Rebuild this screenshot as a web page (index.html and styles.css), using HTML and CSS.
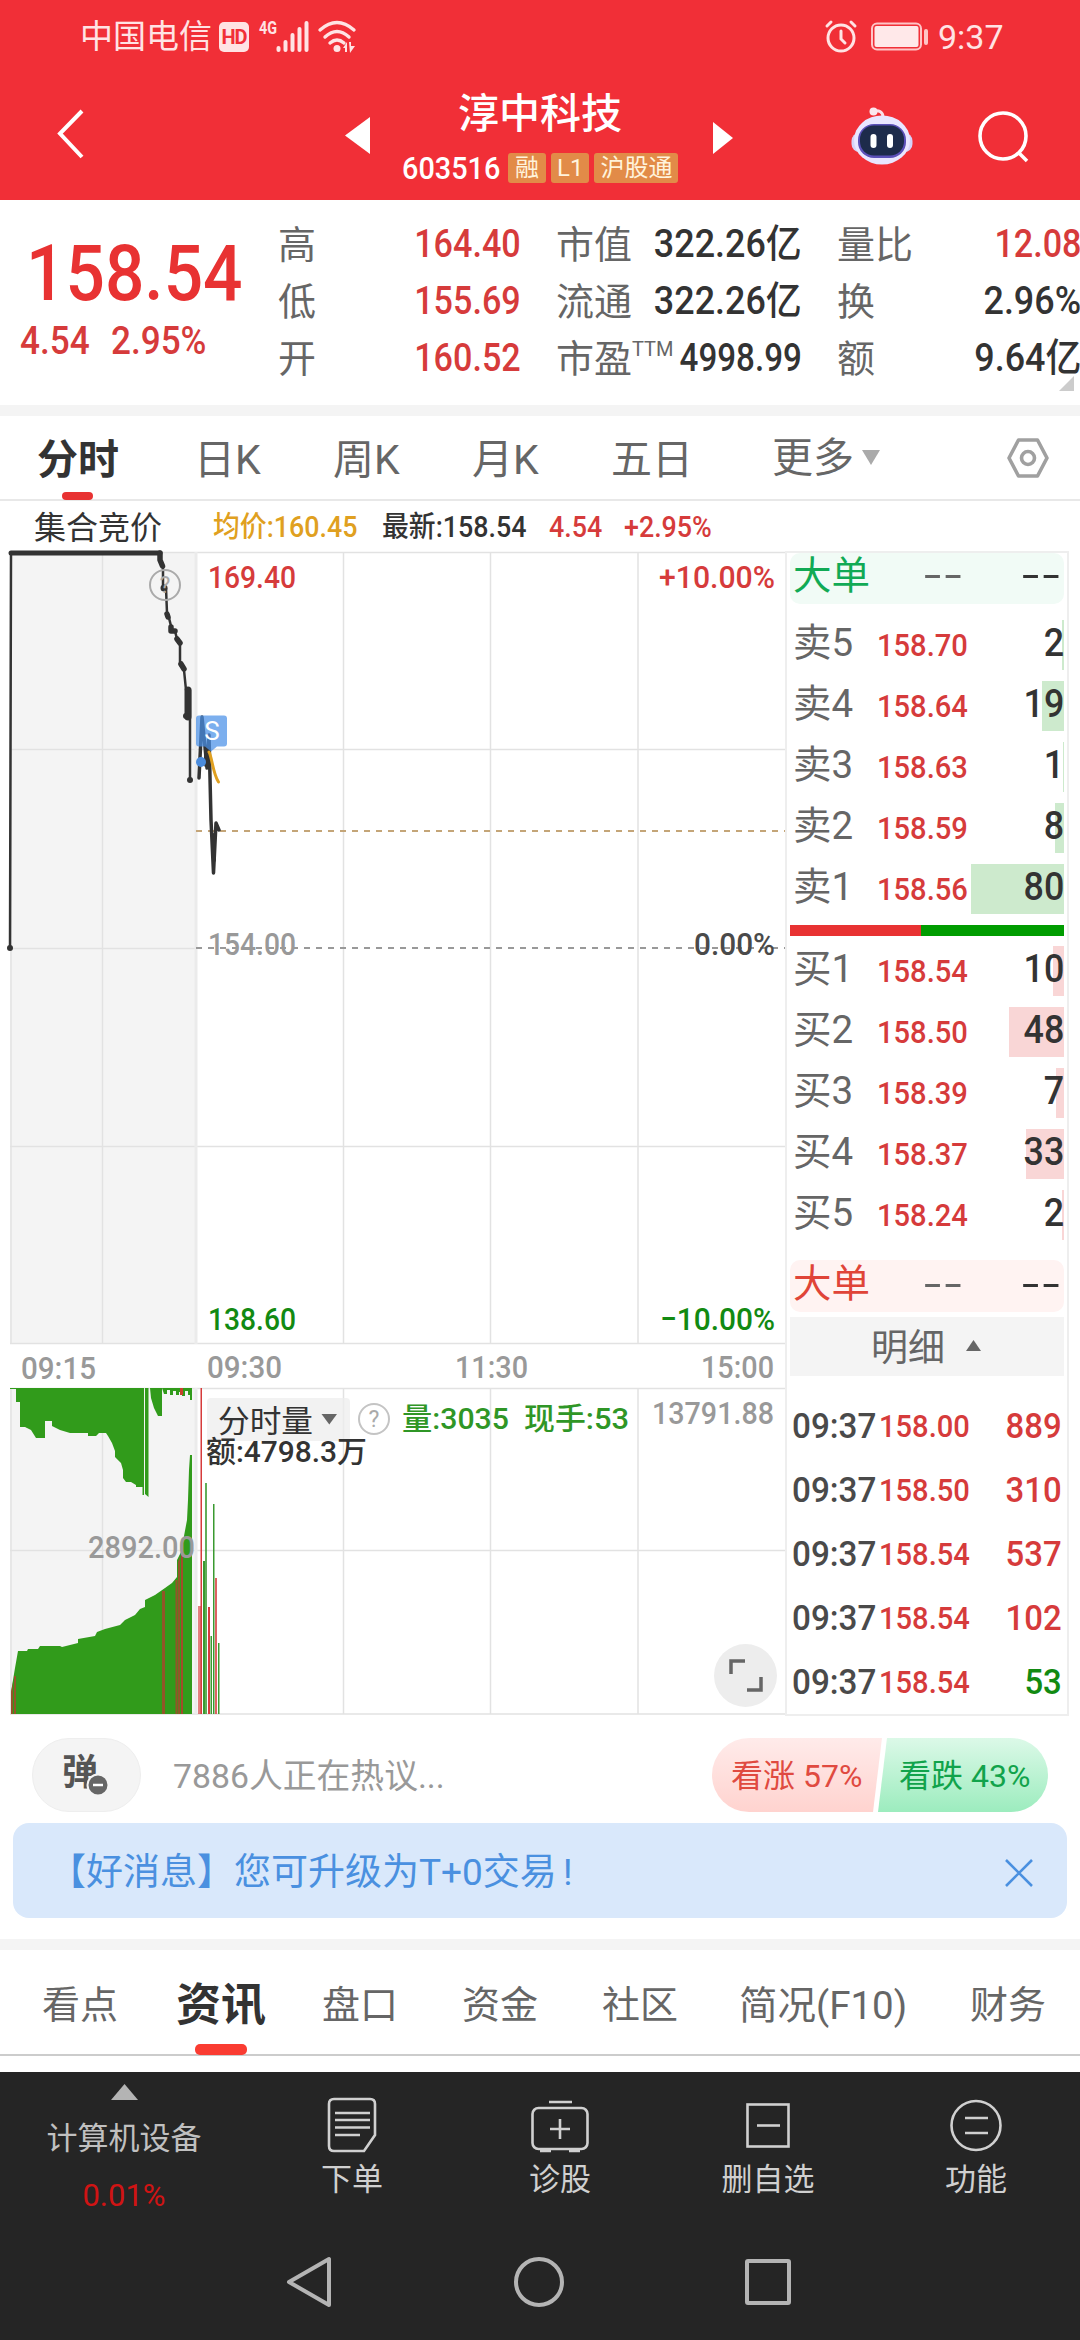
FILE: index.html
```html
<!DOCTYPE html>
<html lang="zh-CN">
<head>
<meta charset="utf-8">
<title>淳中科技 603516</title>
<link rel="stylesheet" href="styles.css">
</head>
<body>
<header class="top">
  <div class="status">
    <span class="carrier">中国电信</span>
    <span class="hd">HD</span>
    <svg class="signal" width="100" height="34" viewBox="0 0 100 34" fill="#ffe3e4">
      <text x="0" y="14" font-size="19" font-weight="700" textLength="18" lengthAdjust="spacingAndGlyphs">4G</text>
      <rect x="17.500" y="26" width="4" height="6" rx="2"/><rect x="24.500" y="20" width="4" height="12" rx="2"/><rect x="31.500" y="13" width="4" height="19" rx="2"/><rect x="38.500" y="7" width="4" height="25" rx="2"/><rect x="45.500" y="1" width="4" height="31" rx="2"/>
      <g fill="none" stroke="#ffe3e4" stroke-width="3.400" stroke-linecap="round"><path d="M61 10Q78-5 95 10"/><path d="M66 17Q78 6 90 17"/><path d="M71 23Q78 17 85 23"/></g>
      <circle cx="78" cy="28.500" r="3.500"/><path d="M84 28l4-6v10h-2v-4zM90 22h2v4h4l-5 7z"/>
    </svg>
    <svg class="alarm" width="32" height="34" viewBox="0 0 32 34" fill="none" stroke="#ffe3e4" stroke-width="3" stroke-linecap="round"><circle cx="16" cy="18" r="13"/><path d="M16 11v8l4 4M2 6l4-4M30 6l-4-4"/></svg>
    <svg class="battery" width="60" height="32" viewBox="0 0 60 32"><rect x="2" y="2.500" width="49" height="26" rx="5" fill="none" stroke="#ffc4c6" stroke-width="2"/><rect x="4.500" y="5" width="44" height="21" rx="2" fill="#ffe8e9"/><rect x="54" y="8" width="4" height="16" rx="2" fill="#ffc4c6"/></svg>
    <span class="clock">9:37</span>
  </div>
  <div class="bar">
    <svg class="back" width="30" height="52" viewBox="0 0 30 52" fill="none" stroke="#fff" stroke-width="4"><path d="M26 3 4 25.500 26 49"/></svg>
    <svg class="prev" width="25" height="37" viewBox="0 0 25 37"><path d="M0 18.500 25 0v37z" fill="#fff"/></svg>
    <div class="name">
      <h1>淳中科技</h1>
      <div class="code"><span class="digits">603516</span><i>融</i><i>L1</i><i>沪股通</i></div>
    </div>
    <svg class="next" width="20" height="32" viewBox="0 0 20 32"><path d="M20 16 0 0v32z" fill="#fff"/></svg>
    <svg class="robot" width="64" height="60" viewBox="0 0 64 60"><path d="M33 11C33 6 29 4 24 5" fill="none" stroke="#fbdfe8" stroke-width="3"/><circle cx="23.500" cy="5.500" r="4" fill="#fbe7ee"/><rect x="1.500" y="27" width="61" height="19" rx="8" fill="#d6d3f8"/><ellipse cx="32" cy="34" rx="28" ry="24.500" fill="#e9e6ff"/><rect x="8" y="18" width="48" height="34" rx="16" fill="#5b50b8"/><rect x="10" y="19.500" width="44" height="30" rx="14" fill="#1d2b4b"/><rect x="20.500" y="28" width="6" height="14" rx="3" fill="#fff"/><rect x="37" y="28" width="6" height="14" rx="3" fill="#fff"/></svg>
    <svg class="search" width="56" height="56" viewBox="0 0 56 56" fill="none" stroke="#fff" stroke-width="3.600"><circle cx="27" cy="26" r="23"/><path d="M42 42l9 9"/></svg>
  </div>
</header>

<section class="quote">
  <div class="last"><b>158.54</b><p><span>4.54</span><span>2.95%</span></p></div>
  <dl class="c1"><dt>高</dt><dd class="up">164.40</dd><dt>低</dt><dd class="up">155.69</dd><dt>开</dt><dd class="up">160.52</dd></dl>
  <dl class="c2"><dt>市值</dt><dd class="unit">322.26亿</dd><dt>流通</dt><dd class="unit">322.26亿</dd><dt>市盈<sup>TTM</sup></dt><dd class="long">4998.99</dd></dl>
  <dl class="c3"><dt>量比</dt><dd class="up">12.08</dd><dt>换</dt><dd class="unit">2.96%</dd><dt>额</dt><dd class="unit">9.64亿</dd></dl>
  <svg class="corner" width="15" height="15" viewBox="0 0 15 15"><path d="M15 0v15H0z" fill="#ccc"/></svg>
</section>

<nav class="periods">
  <span class="on">分时</span><span>日K</span><span>周K</span><span>月K</span><span>五日</span>
  <span class="more">更多<svg width="18" height="15" viewBox="0 0 18 15"><path d="M0 0h18L9 15z" fill="#aaa"/></svg></span>
  <svg class="gear" width="44" height="42" viewBox="0 0 44 42" fill="none" stroke="#a0a0a0" stroke-width="3.600" stroke-linejoin="round"><path d="M12.500 3h19L41 21l-9.500 18h-19L3 21z"/><circle cx="22" cy="21" r="6.500"/></svg>
</nav>

<main class="market">
  <section class="chart">
    <div class="legend"><span class="auction">集合竞价</span><span class="avg">均价:160.45</span><span class="cur">最新:158.54</span><span class="chg">4.54</span><span class="pct">+2.95%</span></div>
    <svg class="plot" width="785" height="1165" viewBox="0 551 785 1165">
      <rect x="10" y="552" width="186" height="792" fill="#f4f4f4"/>
      <rect x="10" y="1388" width="186" height="326" fill="#f4f4f4"/>
      <g class="grid">
        <path d="M10 552.500H785M10 749.500H785M10 948.500H196M10 1146.500H785M10 1343.500H785M10 1388.500H785M10 1550.500H785M10 1714H785"/>
        <path d="M11 552V1344M102.500 552V1344M343.500 552V1344M490.500 552V1344M638 552V1344M11 1388V1714M102.500 1388V1714M343.500 1388V1714M490.500 1388V1714M638 1388V1714"/>
        <path class="wide" d="M196 552V1344M196 1388V1714"/>
      </g>
      <path d="M196 831H785" stroke="#c4a578" stroke-width="2" stroke-dasharray="6 6"/>
      <path d="M196 948H785" stroke="#999" stroke-width="2" stroke-dasharray="6 6"/>
      <g fill="none" stroke="#333" stroke-linejoin="round" stroke-linecap="round">
        <path d="M10 948 11 553" stroke-width="2.500"/>
        <path d="M11 553H160" stroke-width="5"/>
        <path d="M160 553v7l3 6v22h3l1 25 2 5 2 8v5h4l2 8 3 5v21l4 5 2 20h4v90" stroke-width="2.500"/>
        <path d="M160 553v7l2.500 6M167 614l1 3M171 627v4h4M177 639l3 4M181 664l3 5" stroke-width="5.500"/>
        <path d="M188 690v27" stroke-width="7"/>
        <path d="M199 778 202 717 205 747 207 768 209 735 211 820 213.500 873 216 823 219 830" stroke-width="3.500"/>
        <path d="M206 750v15M208 752v15M214 835v25" stroke-width="4"/>
        <path d="M209 752C212 757 213 774 218.500 782" stroke="#e0a020" stroke-width="3"/>
      </g>
      <g fill="#333"><circle cx="10" cy="948" r="3"/><circle cx="164" cy="588" r="3.500"/><circle cx="190" cy="780" r="3"/><circle cx="186" cy="716" r="3"/></g>
      <g class="hint"><circle cx="165" cy="585" r="15"/><text x="165" y="593">?</text></g>
      <path d="M199 715.500h25a3 3 0 0 1 3 3v25a3 3 0 0 1-3 3h-7l-6 5-6-5h-6a3 3 0 0 1-3-3v-25a3 3 0 0 1 3-3z" fill="#4a90e8" opacity=".72"/>
      <circle cx="201" cy="762" r="5" fill="#4a8bdc"/>
      <text x="212" y="740" fill="#fff" font-size="26" text-anchor="middle">S</text>
      <g class="axis">
        <text class="r" x="208" y="588" textLength="88" lengthAdjust="spacingAndGlyphs">169.40</text>
        <text class="r" x="659" y="588" textLength="116" lengthAdjust="spacingAndGlyphs">+10.00%</text>
        <text x="208" y="955" textLength="88" lengthAdjust="spacingAndGlyphs">154.00</text>
        <text class="k" x="694" y="955" textLength="81" lengthAdjust="spacingAndGlyphs">0.00%</text>
        <text class="g" x="208" y="1330" textLength="88" lengthAdjust="spacingAndGlyphs">138.60</text>
        <text class="g" x="660" y="1330" textLength="115" lengthAdjust="spacingAndGlyphs">−10.00%</text>
        <text x="21" y="1379" textLength="75" lengthAdjust="spacingAndGlyphs">09:15</text>
        <text x="207" y="1378" textLength="75" lengthAdjust="spacingAndGlyphs">09:30</text>
        <text x="455" y="1378" textLength="73" lengthAdjust="spacingAndGlyphs">11:30</text>
        <text x="701" y="1378" textLength="73" lengthAdjust="spacingAndGlyphs">15:00</text>
      </g>
      <g fill="#319b1b">
        <path d="M10 1388H144V1495H142.500V1487H136V1485L131 1482H126L123 1478V1470L121 1463 115 1457V1451L112 1443 108 1436 106 1433H99L96 1436H88V1433H70L60 1430 52 1426V1421H45V1438H36L31 1430 25 1427H20V1402H16V1389H10z"/>
        <path d="M145 1388h3.500v109l-3.500-3zM150 1388h12v28h-4l-4-8-3-10z"/>
        <path d="M162 1388h30v12h-2v-5h-2v-4h-3v5h-3v-4h-3v3h-3v-4h-3v4h-3v-5h-3v4h-3z"/>
        <path d="M11 1714V1692L15 1668 18 1651H27L28 1649H38L40 1646H60L62 1647 78 1643V1639L95 1636 97 1632 105 1629 120 1625 125 1620 135 1615 140 1609 145 1607V1600L155 1595 165 1588 172 1583 177 1577V1560L182 1550 184 1536 187 1520 188 1500 189 1470 190 1455H192V1714z"/>
      </g>
      <g fill="#a34a2a"><path d="M11 1714v-22l2-10v32zM14 1676h2v38h-2zM162 1591h3v123h-3zM175.500 1580h2v134h-2zM178 1562l2-5v157h-2z" opacity=".85"/><rect x="181" y="1553" width="2" height="161"/><path d="M180 1388h3v7h-3z" fill="#c8402c"/></g>
      <g class="bars">
        <rect class="r" x="198" y="1606" width="3" height="108" opacity=".65"/><rect class="r" x="200.500" y="1388" width="1.500" height="326"/><rect class="g" x="203" y="1561" width="2" height="153"/><rect class="g" x="205" y="1483" width="2" height="231" opacity=".8"/><rect class="r" x="208" y="1607" width="2" height="107"/><rect class="g" x="210.500" y="1636" width="1.500" height="78"/><rect class="g" x="213" y="1504" width="1.500" height="210"/><rect class="r" x="215" y="1578" width="2" height="136" opacity=".8"/><rect class="g" x="218" y="1643" width="1.500" height="71"/>
      </g>
      <rect x="207" y="1398" width="143" height="43" rx="4" fill="#ededed" opacity=".75"/>
      <path d="M321.500 1414h15.500l-7.700 10.500z" fill="#666"/>
      <g class="hint light"><circle cx="374" cy="1419" r="15"/><text x="374" y="1427">?</text></g>
      <g class="info">
        <text class="pick" x="218" y="1432" textLength="95" lengthAdjust="spacingAndGlyphs">分时量</text>
        <text class="g" x="402" y="1429" textLength="107" lengthAdjust="spacingAndGlyphs">量:3035</text>
        <text class="g" x="524" y="1429" textLength="105" lengthAdjust="spacingAndGlyphs">现手:53</text>
        <text x="206" y="1462" textLength="161" lengthAdjust="spacingAndGlyphs">额:4798.3万</text>
      </g>
      <g class="axis"><text x="652" y="1424" textLength="122" lengthAdjust="spacingAndGlyphs">13791.88</text><text x="88" y="1558" textLength="107" lengthAdjust="spacingAndGlyphs">2892.00</text></g>
      <circle cx="745.500" cy="1675.500" r="31.500" fill="#ededed"/>
      <path d="M731 1674v-13h14M761 1677v13h-14" fill="none" stroke="#666" stroke-width="3.500"/>
    </svg>
  </section>

  <aside class="book">
    <div class="big sell"><span>大单</span><em>--</em><em>--</em></div>
    <ul class="ask">
      <li><span>卖5</span><b>158.70</b><i style="background-size:2px"><u>2</u></i></li>
      <li><span>卖4</span><b>158.64</b><i style="background-size:22px"><u>19</u></i></li>
      <li><span>卖3</span><b>158.63</b><i style="background-size:1px"><u>1</u></i></li>
      <li><span>卖2</span><b>158.59</b><i style="background-size:9px"><u>8</u></i></li>
      <li><span>卖1</span><b>158.56</b><i style="background-size:93px"><u>80</u></i></li>
    </ul>
    <div class="ratio"></div>
    <ul class="bid">
      <li><span>买1</span><b>158.54</b><i style="background-size:11px"><u>10</u></i></li>
      <li><span>买2</span><b>158.50</b><i style="background-size:55px"><u>48</u></i></li>
      <li><span>买3</span><b>158.39</b><i style="background-size:8px"><u>7</u></i></li>
      <li><span>买4</span><b>158.37</b><i style="background-size:38px"><u>33</u></i></li>
      <li><span>买5</span><b>158.24</b><i style="background-size:2px"><u>2</u></i></li>
    </ul>
    <div class="big buy"><span>大单</span><em>--</em><em>--</em></div>
    <div class="detail">明细<svg width="15" height="11" viewBox="0 0 15 11"><path d="M0 11h15L7.500 0z" fill="#666"/></svg></div>
    <ul class="ticks">
      <li><span>09:37</span><b>158.00</b><u>889</u></li>
      <li><span>09:37</span><b>158.50</b><u>310</u></li>
      <li><span>09:37</span><b>158.54</b><u>537</u></li>
      <li><span>09:37</span><b>158.54</b><u>102</u></li>
      <li><span>09:37</span><b>158.54</b><u class="down">53</u></li>
    </ul>
  </aside>
</main>

<section class="talk">
  <div class="danmu">弹<svg width="24" height="24" viewBox="0 0 24 24"><circle cx="12" cy="12" r="10.500" fill="#666" stroke="#f4f4f4" stroke-width="2"/><path d="M7 12h10" stroke="#fff" stroke-width="2.500"/></svg></div>
  <p>7886人正在热议...</p>
  <div class="vote"><span class="rise">看涨 57%</span><span class="fall">看跌 43%</span></div>
</section>
<section class="notice"><p>【好消息】您可升级为T+0交易<span>!</span></p><svg width="28" height="28" viewBox="0 0 28 28" stroke="#4a90e0" stroke-width="2.600"><path d="M1 1l26 26M27 1 1 27"/></svg></section>

<nav class="sections"><span>看点</span><span class="on">资讯</span><span>盘口</span><span>资金</span><span>社区</span><span>简况(F10)</span><span>财务</span></nav>

<footer>
  <div class="tools">
    <div class="sector"><svg width="27" height="16" viewBox="0 0 27 16"><path d="M13.500 0 27 16H0z" fill="#b4b4b4"/></svg><span>计算机设备</span><em>0.01%</em></div>
    <div class="tool"><svg width="60" height="60" viewBox="0 0 60 60"><path d="M12 4h36q5 0 5 5v31L42 56H12q-5 0-5-5V9q0-5 5-5z"/><path d="M13 18h35M13 25h35M13 32.500h35M13 40h25"/></svg><span>下单</span></div>
    <div class="tool"><svg width="60" height="60" viewBox="0 0 60 60"><rect x="2.500" y="13" width="55" height="41" rx="6"/><path d="M19 7h23M30 24v20M20 34h20M10 56h11M39 56h11"/></svg><span>诊股</span></div>
    <div class="tool"><svg width="60" height="60" viewBox="0 0 60 60"><rect x="9.500" y="9.500" width="41" height="42"/><path d="M19 30.500h23"/></svg><span>删自选</span></div>
    <div class="tool"><svg width="60" height="60" viewBox="0 0 60 60"><circle cx="30" cy="30.500" r="24.500"/><path d="M19 23h23M19 38h23"/></svg><span>功能</span></div>
  </div>
  <div class="system">
    <svg width="52" height="56" viewBox="0 0 52 56"><path d="M45 5v46L5 28z"/></svg>
    <svg width="52" height="56" viewBox="0 0 52 56"><circle cx="26" cy="28" r="23"/></svg>
    <svg width="52" height="56" viewBox="0 0 52 56"><rect x="5" y="7" width="42" height="42" rx="1"/></svg>
  </div>
</footer>
</body>
</html>
```
FILE: styles.css
```css
* { box-sizing: border-box; margin: 0; padding: 0; }
body { width: 1080px; height: 2340px; overflow: hidden; background: #fff; color: #333; font-family: Roboto, "Noto Sans CJK SC", sans-serif; line-height: 1; }
svg { display: block; flex: none; overflow: visible; }
ul { list-style: none; }
i, em { font-style: normal; }
u { text-decoration: none; }
span, p, dt, dd, b, i { white-space: nowrap; }

.top { height: 200px; background: #f12f37; color: #fff; }
.status { height: 73px; padding: 0 75px 0 80px; display: flex; align-items: center; color: #ffe3e4; }
.carrier { font-size: 33px; width: 139px; }
.hd { width: 30px; height: 30px; border-radius: 5px; background: #ffe3e4; color: #f12f37; font-size: 20px; font-weight: 700; line-height: 30px; text-align: center; letter-spacing: -1px; }
.signal { margin-left: 10px; }
.alarm { margin-left: auto; }
.battery { margin-left: 13px; }
.clock { margin-left: 8px; font-size: 34px; width: 67px; line-height: 78px; }

.bar { height: 127px; display: flex; align-items: flex-start; padding: 0 49px 0 56px; }
.back { margin-top: 35px; }
.prev { margin: 44px 0 0 259px; }
.name { flex: none; width: 280px; margin: 17px 0 0 32px; }
h1 { font-size: 41px; font-weight: 500; line-height: 48px; padding-left: 56px; }
.code { display: flex; align-items: center; height: 30px; margin-top: 15px; }
.digits { flex: none; width: 106px; font-size: 31px; font-weight: 500; transform: scaleX(.93); transform-origin: left; }
.code i { flex: none; height: 30px; line-height: 30px; padding: 0 6px; margin-right: 5px; border-radius: 3px; background: #e28b48; color: #fff3dc; font-size: 24px; }
.code i:nth-of-type(1) { padding: 0 7px; }
.next { margin: 49px 0 0 31px; }
.robot { margin: 33px 0 0 117px; }
.search { margin: 37px 0 0 62px; }

.quote { height: 216px; border-bottom: 11px solid #f4f4f4; display: flex; align-items: flex-start; position: relative; }
.last { flex: none; width: 278px; padding: 37px 0 0 26px; color: #e83232; }
.last b { display: block; font-size: 78px; font-weight: 500; line-height: 74px; transform: scaleX(.89); transform-origin: left; }
.last p { display: flex; margin: 9px 0 0 -6px; font-size: 39px; line-height: 42px; color: #d63b3b; font-weight: 500; }
.last p span { width: 91px; transform: scaleX(.9); transform-origin: left; }
.quote dl { flex: none; display: grid; grid-auto-rows: 57px; padding-top: 16px; align-items: center; font-size: 38px; }
.quote dt { color: #666; }
.quote dd { color: #333; font-weight: 500; font-size: 39px; text-align: right; transform: scaleX(.875); transform-origin: right; justify-self: end; }
.quote dd.up { color: #d63b3b; }
.quote dd.unit { transform: scaleX(.92); }
.quote dd.long { transform: scaleX(.85); }
.c1 { width: 243px; grid-template-columns: 60px 183px; }
.c2 { width: 246px; margin-left: 35px; grid-template-columns: 76px 170px; }
.c3 { width: 244px; margin-left: 35px; grid-template-columns: 76px 168px; }
sup { font-size: 20px; vertical-align: 16px; line-height: 0; }
.corner { position: absolute; left: 1059px; top: 176px; }

.periods { height: 85px; border-bottom: 2px solid #e8e8e8; padding: 0 30px 0 37px; display: flex; align-items: center; font-size: 41px; color: #666; }
.periods span { flex: none; height: 83px; line-height: 88px; width: 139px; }
.periods .on { width: 157px; padding-top: 12px; line-height: 64px; color: #333; font-weight: 700; }
.periods .on::after { content: ""; display: block; width: 31px; height: 8px; margin-left: 25px; border-radius: 4px; background: #e83232; }
.periods .more { display: flex; align-items: center; width: 112px; gap: 8px; margin-left: 22px; }
.gear { margin-left: auto; }

.market { display: flex; height: 1214px; }
.chart { width: 785px; }
.legend { height: 50px; padding-top: 3px; display: flex; align-items: center; font-size: 29px; font-weight: 500; }
.legend span { flex: none; }
.auction { width: 213px; padding-left: 34px; font-size: 32px; font-weight: 400; }
.legend span + span { transform: scaleX(.925); transform-origin: left; }
.avg { width: 169px; color: #e0a020; }
.cur { width: 167px; }
.chg { width: 75px; color: #d63b3b; }
.pct { color: #d63b3b; }
.grid { fill: none; stroke: #e2e2e2; stroke-width: 1.5; }
.grid .wide { stroke: #ebebeb; stroke-width: 3; }
.hint circle { fill: none; stroke: #aaa; stroke-width: 2; }
.hint text { fill: #aaa; font-size: 23px; text-anchor: middle; }
.hint.light circle { stroke: #c4c4c4; }
.axis { font-size: 32px; font-weight: 500; fill: #999; }
.axis .r, .bars .r { fill: #d63b3b; }
.axis .g { fill: #128a12; }
.axis .k { fill: #4a4a4a; }
.bars .g { fill: #3a9a30; }
.info { font-size: 30px; font-weight: 500; fill: #333; }
.info .pick { font-size: 31px; font-weight: 400; }
.info .g { fill: #2f9626; }

.book { width: 284px; height: 1165px; margin-top: 50px; border: 2px solid #eee; padding: 0 3px; }
.big { height: 51px; border-radius: 10px; display: flex; align-items: center; padding: 0 0 5px 3px; font-size: 38.5px; }
.big span { flex: none; width: 131px; }
.big em { flex: none; width: 98px; font-size: 40px; letter-spacing: 2.2px; transform: scaleX(1.55); transform-origin: left; color: #666; }
.big em:last-child { width: 40px; color: #333; }
.sell { background: #f1fbf6; color: #11aa55; }
.buy { background: #fff3f2; color: #e04438; margin-top: 15px; height: 52px; padding-bottom: 3px; }
.ask, .bid { display: grid; grid-auto-rows: 61px; }
.ask { padding-top: 10px; height: 321px; }
.ask li, .bid li { display: flex; align-items: center; }
.ask span, .bid span { flex: none; width: 87px; padding: 0 0 2px 3px; font-size: 38.5px; color: #666; }
.ask b, .bid b { flex: none; width: 94px; margin-top: 1px; font-size: 32px; font-weight: 500; color: #d63b3b; transform: scaleX(.91); transform-origin: left; }
.ask i, .bid i { flex: 1; height: 50px; padding-bottom: 2px; display: flex; justify-content: flex-end; align-items: center; font-size: 39px; font-weight: 500; background: linear-gradient(#cdeacd, #cdeacd) right no-repeat; }
.bid i { background-image: linear-gradient(#f9d6d6, #f9d6d6); }
.ask u, .bid u { transform: scaleX(.92); transform-origin: right; }
.ratio { height: 11px; background: linear-gradient(90deg, #e83232 131px, #009c00 131px); }
.ratio + ul { margin-top: 4px; }
.detail { height: 59px; margin-top: 5px; padding: 3px 2px 0 0; background: #f4f4f4; color: #666; display: flex; align-items: center; justify-content: center; gap: 21px; font-size: 37px; }
.detail svg { margin-top: -5px; }
.ticks { padding-top: 18px; display: grid; grid-auto-rows: 64px; }
.ticks li { display: flex; align-items: center; padding: 0 2px; }
.ticks span { width: 87px; font-size: 35px; color: #4a4a4a; font-weight: 500; transform: scaleX(.95); transform-origin: left; }
.ticks b { width: 100px; font-size: 32px; font-weight: 500; color: #d63b3b; transform: scaleX(.91); transform-origin: left; }
.ticks u { margin-left: auto; font-size: 35px; font-weight: 500; color: #d63b3b; transform: scaleX(.94); transform-origin: right; }
.ticks .down { color: #128a12; }

.talk { height: 108px; padding: 23px 32px 0; display: flex; }
.danmu { width: 109px; height: 74px; border-radius: 37px; background: #f4f4f4; border: 1px solid #eee; color: #555; font-size: 36px; font-weight: 700; line-height: 68px; padding-left: 29px; display: flex; }
.danmu svg { margin: 34px 0 0 -12px; }
.talk p { margin-left: 32px; font-size: 33.8px; line-height: 77px; color: #999; }
.vote { margin-left: auto; width: 336px; height: 74px; border-radius: 37px; overflow: hidden; display: flex; font-size: 32px; line-height: 76px; }
.rise { flex: none; width: 171px; margin-right: -5px; padding-left: 19px; color: #e04a40; background: linear-gradient(#ffebea, #ffd3cf); clip-path: polygon(0 0, 170px 0, 161px 100%, 0 100%); }
.fall { flex: none; width: 170px; padding-left: 21px; color: #11a34b; background: linear-gradient(#dcf9e8, #9cecbe); clip-path: polygon(9px 0, 100% 0, 100% 100%, 0 100%); }

.notice { height: 95px; margin: 0 13px 21px; border-radius: 16px; background: #d9e8fb; color: #4a90e0; display: flex; align-items: center; justify-content: space-between; padding: 4px 34px 0 36px; font-size: 37px; }
.notice span { margin-left: 6px; }

.sections { height: 117px; border-top: 11px solid #f4f4f4; border-bottom: 2px solid #ccc; padding-left: 42px; display: flex; align-items: center; font-size: 38px; color: #666; }
.sections span { flex: none; height: 104px; line-height: 111px; width: 140px; }
.sections span:first-child { width: 134px; }
.sections .on { width: 146px; padding-top: 20px; line-height: 71px; color: #333; font-size: 45px; font-weight: 700; }
.sections .on::after { content: ""; display: block; width: 52px; height: 11px; margin: 3px 0 0 19px; border-radius: 5px; background: #fa3c32; }
.sections span:nth-child(5) { width: 137px; }
.sections span:nth-child(6) { width: 231px; font-size: 38.5px; }
.sections span:last-child { width: 80px; }

footer { height: 268px; margin-top: 16px; background: #252525; color: #d0d0d0; }
.tools { height: 152px; display: flex; font-size: 31px; }
.sector { width: 248px; display: flex; flex-direction: column; align-items: center; padding-top: 12px; color: #c0c0c0; }
.sector span { margin-top: 23px; line-height: 32px; }
.sector em { margin-top: 25px; line-height: 32px; color: #d01414; }
.tool { width: 208px; display: flex; flex-direction: column; align-items: center; padding-top: 23px; }
.tool svg { fill: none; stroke: #d0d0d0; stroke-width: 2.6; }
.tool span { margin-top: 9px; line-height: 32px; }
.system { height: 116px; padding: 30px 286px 0 284px; display: flex; justify-content: space-between; }
.system svg { fill: none; stroke: #b4b4b4; stroke-width: 4; stroke-linejoin: round; }
```
